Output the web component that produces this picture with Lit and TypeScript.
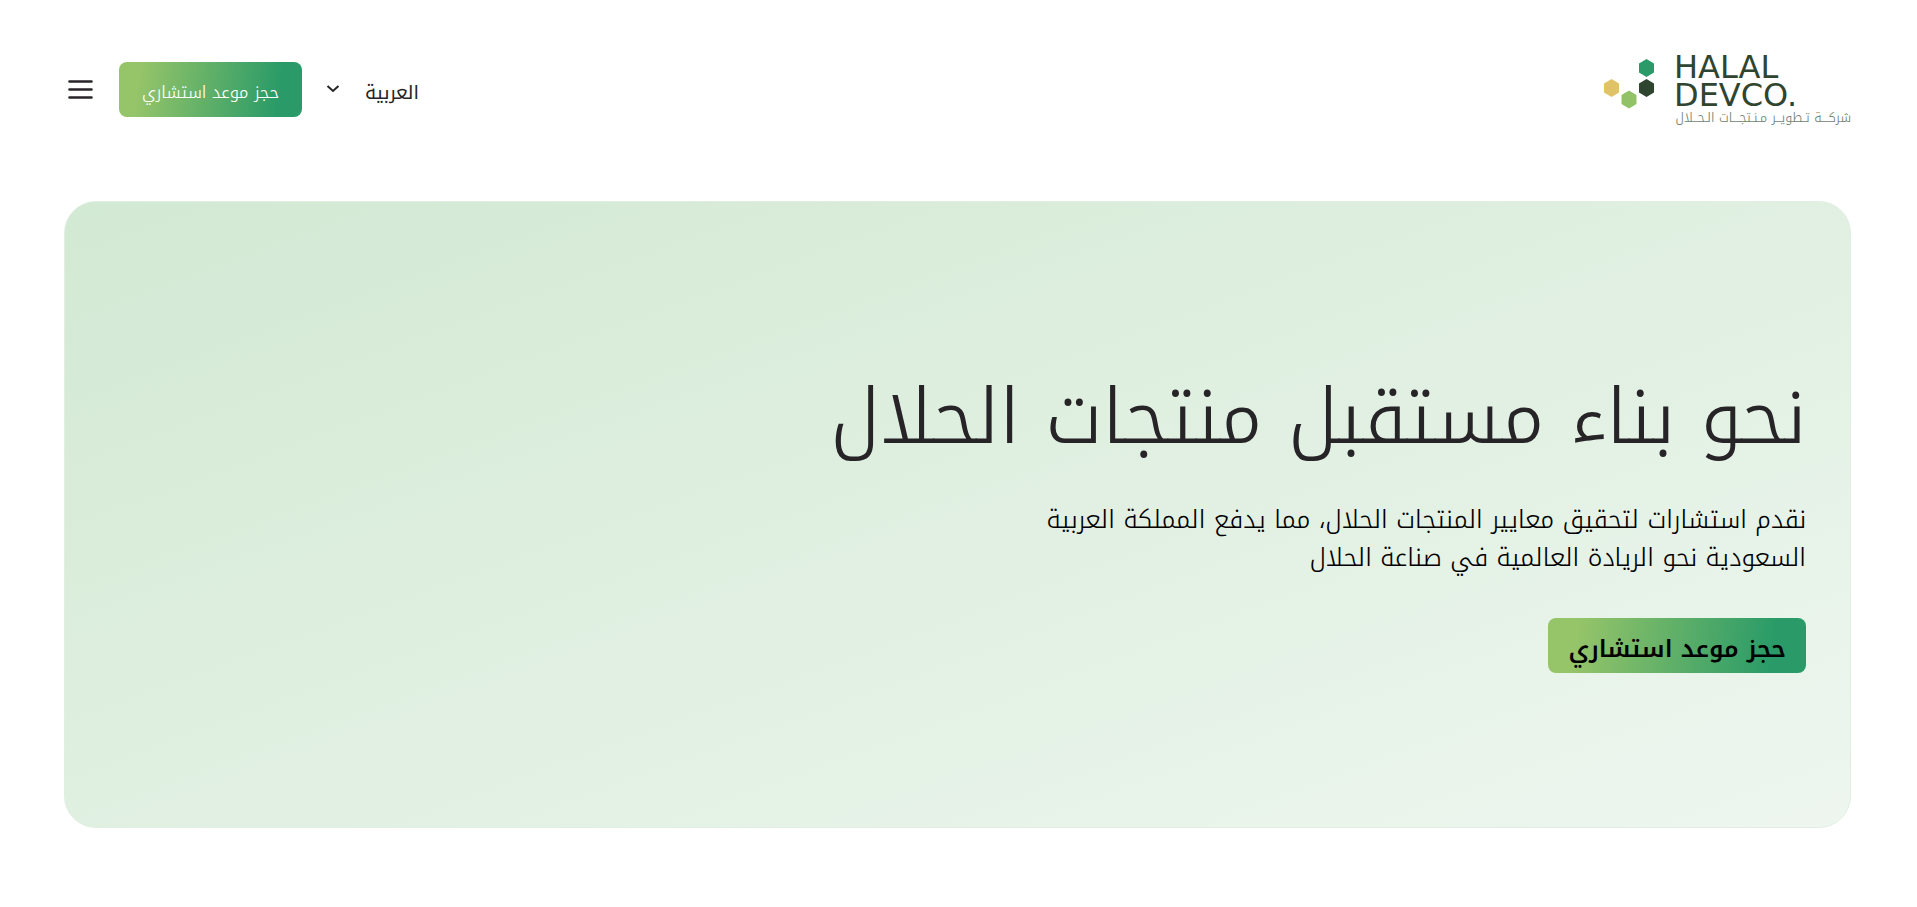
import { LitElement, html, css } from "lit";
import { customElement } from "lit/decorators.js";

@customElement("brand-logo")
class BrandLogo extends LitElement {
  static styles = css`
    :host {
      display: block;
    }
    .logo {
      display: flex;
      direction: ltr;
      gap: 20px;
      padding-top: 2px;
      color: #2f452f;
      text-decoration: none;
    }
    .mark {
      display: block;
      width: 50px;
      height: 56px;
      margin-top: 5px;
    }
    .words {
      display: grid;
      width: 177px;
      white-space: nowrap;
    }
    .latin {
      font: 32px/28px "DejaVu Sans", sans-serif;
    }
    .arabic {
      direction: rtl;
      font: 300 13px/18px "Noto Kufi Arabic", "DejaVu Sans", sans-serif;
      color: #6f8270;
    }
  `;

  render() {
    return html`
      <a class="logo" href="#">
        <svg class="mark" viewBox="0 0 50 56" aria-hidden="true">
          <path fill="#2a9b68" d="M42.500 1 L50 5.500 V14.500 L42.500 19 L35 14.500 V5.500 Z" />
          <path fill="#2f452f" d="M42.500 21 L50 25.500 V34.500 L42.500 39 L35 34.500 V25.500 Z" />
          <path fill="#dfc366" d="M7.500 21 L15 25.500 V34.500 L7.500 39 L0 34.500 V25.500 Z" />
          <path fill="#92c268" d="M25 32.500 L32.500 37 V46 L25 50.500 L17.500 46 V37 Z" />
        </svg>
        <span class="words">
          <span class="latin">HALAL</span>
          <span class="latin">DEVCO.</span>
          <span class="arabic">شركـــة تـطويــر مـنـتجـــات الـحــلال</span>
        </span>
      </a>
    `;
  }
}

@customElement("app-root")
class AppRoot extends LitElement {
  static styles = css`
    :host {
      display: block;
      direction: rtl;
      box-sizing: border-box;
      padding: 51px 66px 51px 64px;
      background: #fff;
      color: #272427;
      font-family: "Noto Kufi Arabic", "DejaVu Sans", sans-serif;
      font-weight: 300;
    }
    .header {
      display: flex;
      align-items: center;
      justify-content: space-between;
      margin-bottom: 74px;
    }
    .tools {
      display: flex;
      align-items: center;
      gap: 24px;
    }
    .language {
      display: grid;
      align-items: center;
    }
    .language > * {
      grid-area: 1 / 1;
    }
    .language select {
      appearance: none;
      border: 0;
      margin: 0;
      padding: 8px 0 0 38px;
      background: none;
      color: inherit;
      font: 400 19px/32px "Noto Kufi Arabic", "DejaVu Sans", sans-serif;
    }
    .chevron {
      justify-self: end;
      width: 14px;
      height: 8px;
      pointer-events: none;
    }
    .cta {
      border: 0;
      border-radius: 8px;
      height: 55px;
      padding: 6px 23px 0;
      background: linear-gradient(98deg, #95c469 12%, #2a9b68 86%);
      color: #fff;
      font: 300 17px/24px "Noto Kufi Arabic", "DejaVu Sans", sans-serif;
    }
    .cta.large {
      padding: 6px 20px 0;
      color: #000;
      font-size: 24px;
      font-weight: 600;
      line-height: 32px;
    }
    .menu {
      display: grid;
      border: 0;
      padding: 4px 2px 4px 4px;
      background: none;
      color: inherit;
    }
    .menu svg {
      display: block;
      width: 25px;
      height: 19px;
    }
    .hero {
      display: flex;
      flex-direction: column;
      align-items: flex-start;
      justify-content: center;
      box-sizing: border-box;
      min-height: 627px;
      padding: 50px 44px 40px;
      border: 1px solid #e0efe2;
      border-radius: 32px;
      background: linear-gradient(160deg, #d2e9d3, #eef6ef);
    }
    .title {
      margin: 0 0 31px;
      font-size: 76px;
      font-weight: 300;
      line-height: 104px;
    }
    .lead {
      max-width: 800px;
      margin: 0 0 41px;
      color: #000;
      font-size: 25px;
      line-height: 38px;
    }
  `;

  render() {
    return html`
      <header class="header">
        <brand-logo></brand-logo>
        <nav class="tools">
          <div class="language">
            <select aria-label="اللغة">
              <option>العربية</option>
            </select>
            <svg class="chevron" viewBox="0 0 14 8" fill="none" stroke="currentColor" stroke-width="2" aria-hidden="true">
              <path d="M1.500 1 L7 6 L12.500 1" />
            </svg>
          </div>
          <button class="cta">حجز موعد استشاري</button>
          <button class="menu" aria-label="القائمة">
            <svg viewBox="0 0 25 19" stroke="currentColor" stroke-width="2.600" stroke-linecap="round" aria-hidden="true">
              <path d="M1.500 1.500 H23.500 M1.500 9.500 H23.500 M1.500 17.500 H23.500" />
            </svg>
          </button>
        </nav>
      </header>
      <main class="hero">
        <h1 class="title">نحو بناء مستقبل منتجات الحلال</h1>
        <p class="lead">
          نقدم استشارات لتحقيق معايير المنتجات الحلال، مما يدفع المملكة العربية السعودية نحو الريادة العالمية في صناعة الحلال
        </p>
        <button class="cta large">حجز موعد استشاري</button>
      </main>
    `;
  }
}
